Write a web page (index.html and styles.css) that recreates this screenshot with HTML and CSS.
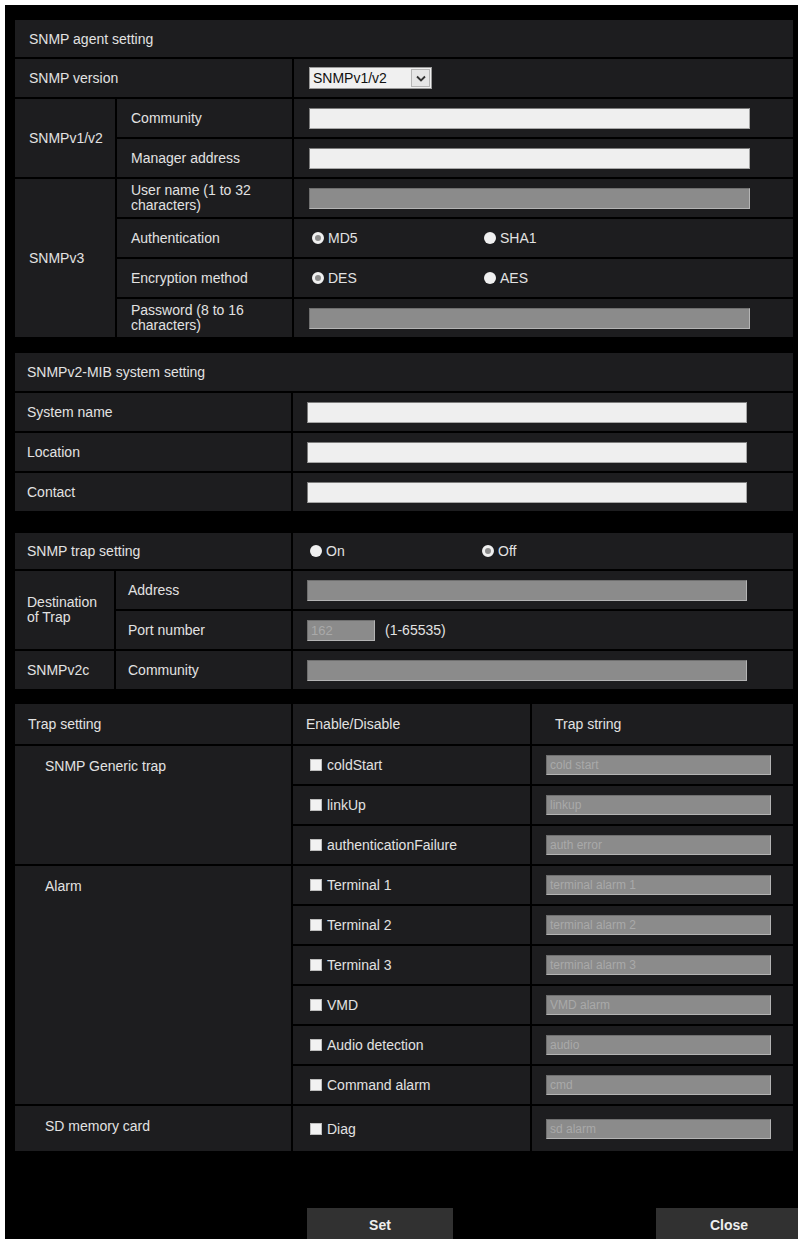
FILE: index.html
```html
<!DOCTYPE html>
<html lang="en">
<head>
    <meta charset="UTF-8">
    <meta name="viewport" content="width=device-width, initial-scale=1.0">
    <title>SNMP setting</title>

    <link rel="stylesheet" href="styles.css">

</head>
<body>
    <div class="page">

        <!-- agent -->
        <section class="panel panel-agent">
            <div class="cell head">SNMP agent setting</div>
            <div class="cell span2">SNMP version</div>
            <div class="cell val">
                <div class="select">
                    <span class="select-text">SNMPv1/v2</span>
                    <span class="select-btn">
                        <svg width="10" height="7" viewBox="0 0 10 7"><path d="M1 1.5 L5 5.5 L9 1.5" fill="none" stroke="#333" stroke-width="1.8"/></svg>
                    </span>
                </div>
            </div>

            <div class="cell rows2">SNMPv1/v2</div>
            <div class="cell">Community</div>
            <div class="cell val"><input type="text" class="text"></div>
            <div class="cell">Manager address</div>
            <div class="cell val"><input type="text" class="text"></div>

            <div class="cell rows4">SNMPv3</div>
            <div class="cell two-line">User name (1 to 32 characters)</div>
            <div class="cell val"><input type="text" class="text" disabled></div>
            <div class="cell">Authentication</div>
            <div class="cell val">
                <label class="opt"><input type="radio" name="auth" class="radio" checked>MD5</label>
                <label class="opt"><input type="radio" name="auth" class="radio">SHA1</label>
            </div>
            <div class="cell">Encryption method</div>
            <div class="cell val">
                <label class="opt"><input type="radio" name="enc" class="radio" checked>DES</label>
                <label class="opt"><input type="radio" name="enc" class="radio">AES</label>
            </div>
            <div class="cell two-line">Password (8 to 16 characters)</div>
            <div class="cell val"><input type="text" class="text" disabled></div>
        </section>

        <!-- mib -->
        <section class="panel panel-mib">
            <div class="cell head">SNMPv2-MIB system setting</div>
            <div class="cell">System name</div>
            <div class="cell val"><input type="text" class="text"></div>
            <div class="cell">Location</div>
            <div class="cell val"><input type="text" class="text"></div>
            <div class="cell">Contact</div>
            <div class="cell val"><input type="text" class="text"></div>
        </section>

        <!-- trap -->
        <section class="panel panel-trap">
            <div class="cell span2">SNMP trap setting</div>
            <div class="cell val">
                <label class="opt"><input type="radio" name="trap" class="radio">On</label>
                <label class="opt"><input type="radio" name="trap" class="radio" checked>Off</label>
            </div>
            <div class="cell rows2 two-line">Destination of Trap</div>
            <div class="cell">Address</div>
            <div class="cell val"><input type="text" class="text" disabled></div>
            <div class="cell">Port number</div>
            <div class="cell val"><input type="text" class="text port" value="162" disabled><span class="range">(1-65535)</span></div>
            <div class="cell">SNMPv2c</div>
            <div class="cell">Community</div>
            <div class="cell val"><input type="text" class="text" disabled></div>
        </section>

        <!-- trap strings -->
        <section class="panel panel-strings">
            <div class="cell th">Trap setting</div>
            <div class="cell th">Enable/Disable</div>
            <div class="cell th th-str">Trap string</div>

            <div class="cell sub rows3">SNMP Generic trap</div>
            <div class="cell cb"><label class="opt"><input type="checkbox" class="check">coldStart</label></div>
            <div class="cell str"><input type="text" class="text" value="cold start" disabled></div>
            <div class="cell cb"><label class="opt"><input type="checkbox" class="check">linkUp</label></div>
            <div class="cell str"><input type="text" class="text" value="linkup" disabled></div>
            <div class="cell cb"><label class="opt"><input type="checkbox" class="check">authenticationFailure</label></div>
            <div class="cell str"><input type="text" class="text" value="auth error" disabled></div>

            <div class="cell sub rows6">Alarm</div>
            <div class="cell cb"><label class="opt"><input type="checkbox" class="check">Terminal 1</label></div>
            <div class="cell str"><input type="text" class="text" value="terminal alarm 1" disabled></div>
            <div class="cell cb"><label class="opt"><input type="checkbox" class="check">Terminal 2</label></div>
            <div class="cell str"><input type="text" class="text" value="terminal alarm 2" disabled></div>
            <div class="cell cb"><label class="opt"><input type="checkbox" class="check">Terminal 3</label></div>
            <div class="cell str"><input type="text" class="text" value="terminal alarm 3" disabled></div>
            <div class="cell cb"><label class="opt"><input type="checkbox" class="check">VMD</label></div>
            <div class="cell str"><input type="text" class="text" value="VMD alarm" disabled></div>
            <div class="cell cb"><label class="opt"><input type="checkbox" class="check">Audio detection</label></div>
            <div class="cell str"><input type="text" class="text" value="audio" disabled></div>
            <div class="cell cb"><label class="opt"><input type="checkbox" class="check">Command alarm</label></div>
            <div class="cell str"><input type="text" class="text" value="cmd" disabled></div>

            <div class="cell sub">SD memory card</div>
            <div class="cell cb"><label class="opt"><input type="checkbox" class="check">Diag</label></div>
            <div class="cell str"><input type="text" class="text" value="sd alarm" disabled></div>
        </section>

        <div class="buttons">
            <button class="btn">Set</button>
            <button class="btn">Close</button>
        </div>
    </div>
</body>
</html>
```

FILE: styles.css
```css
body {
    margin: 0;
    background: #fff;
    overflow: hidden;
    font-family: "Liberation Sans", Arial, sans-serif;
    font-size: 14px;
    color: #e2e2e2;
}

.page {
    margin: 5px 0 0 5px;
    padding: 15px 0 0 10px;
    height: 1234px;
    box-sizing: border-box;
    background: #000;
    overflow: hidden;
}

.panel {
    width: 778px;
    display: grid;
    gap: 2px;
    background: #000;
}

.panel-agent {
    grid-template-columns: 100px 175px 1fr;
    grid-template-rows: 37px;
    grid-auto-rows: 38px;
    margin-bottom: 16px;
}

.panel-mib {
    grid-template-columns: 276px 1fr;
    grid-auto-rows: 38px;
    margin-bottom: 22px;
}

.panel-trap {
    grid-template-columns: 99px 175px 1fr;
    grid-template-rows: 36px;
    grid-auto-rows: 38px;
    margin-bottom: 15px;
}

.panel-strings {
    grid-template-columns: 276px 237px 1fr;
    grid-template-rows: 40px repeat(9, 38px) 45px;
}

.cell {
    background: #1d1d1f;
    display: flex;
    align-items: center;
    padding: 0 14px;
    white-space: nowrap;
}

.panel-mib .cell,
.panel-trap .cell {
    padding-left: 12px;
}

.head {
    grid-column: 1 / -1;
}

.span2 { grid-column: span 2; }
.rows2 { grid-row: span 2; }
.rows3 { grid-row: span 3; }
.rows4 { grid-row: span 4; }
.rows6 { grid-row: span 6; }

.two-line {
    white-space: normal;
    line-height: 15px;
}

.panel .val {
    padding-left: 15px;
}

.panel-mib .val,
.panel-trap .val {
    padding-left: 14px;
}

/* inputs */
.text {
    box-sizing: border-box;
    width: 441px;
    height: 21px;
    margin: 0;
    padding: 0 3px;
    border: 1px solid #a6a6a6;
    border-top-color: #7c7c7c;
    border-left-color: #7c7c7c;
    background: #efefef;
    font-family: inherit;
    font-size: 13px;
    color: #222;
}

.panel-mib .text,
.panel-trap .text {
    width: 440px;
}

.text:disabled {
    background: #8b8b8b;
    border-color: #6f6f6f #b4b4b4 #b4b4b4 #6f6f6f;
    color: #a9a9a9;
}

.panel-trap .text.port {
    width: 68px;
}

.range {
    margin-left: 10px;
}

.select {
    width: 123px;
    height: 22px;
    box-sizing: border-box;
    display: flex;
    align-items: center;
    background: #f0f0f0;
    border: 1px solid #9a9a9a;
    color: #111;
}

.select-text {
    flex: 1;
    padding-left: 3px;
}

.select-btn {
    width: 19px;
    height: 18px;
    margin-right: 1px;
    box-sizing: border-box;
    border: 1px solid #b5b5b5;
    background: #e6e6e6;
    display: flex;
    align-items: center;
    justify-content: center;
}

/* radios and checks */
.opt {
    display: flex;
    align-items: center;
    width: 172px;
}

.radio {
    appearance: none;
    -webkit-appearance: none;
    width: 12px;
    height: 12px;
    margin: 0 4px 0 3px;
    border-radius: 50%;
    background: #f0f0f0;
    box-sizing: border-box;
}

.radio:checked {
    border: 3px solid #f0f0f0;
    background: #8c8c8c;
}

.check {
    appearance: none;
    -webkit-appearance: none;
    width: 12px;
    height: 12px;
    margin: 0 5px 0 2px;
    background: #f2f2f2;
    border: 1px solid #bdbdbd;
    box-sizing: border-box;
}

/* trap strings */
.panel-strings .th {
    padding-left: 13px;
}

.panel-strings .th-str {
    padding-left: 23px;
}

.panel-strings .sub {
    align-items: flex-start;
    padding: 12px 0 0 30px;
}

.panel-strings .cb {
    padding-left: 15px;
}

.panel-strings .str {
    padding-left: 14px;
}

.panel-strings .str .text {
    width: 225px;
    height: 20px;
    font-size: 12px;
}

.buttons {
    display: flex;
    gap: 203px;
    margin-top: 57px;
    padding-left: 292px;
}

.btn {
    width: 146px;
    height: 34px;
    flex-shrink: 0;
    background: #313131;
    border: none;
    color: #eee;
    font-family: inherit;
    font-size: 14px;
    font-weight: bold;
}
```
